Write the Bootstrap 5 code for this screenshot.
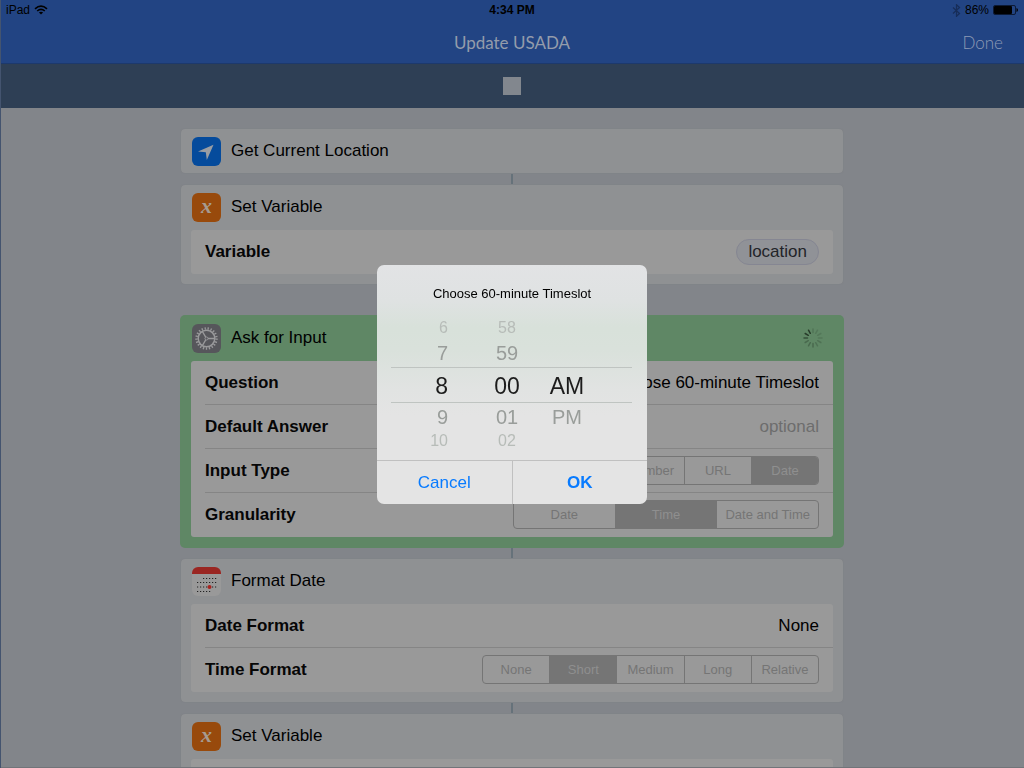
<!DOCTYPE html>
<html lang="en">
<head>
<meta charset="utf-8">
<meta name="viewport" content="width=device-width, initial-scale=1">
<title>Update USADA</title>
<link href="https://cdn.jsdelivr.net/npm/bootstrap@5.3.0/dist/css/bootstrap.min.css" rel="stylesheet">
<style>
  body { font-family: "Liberation Sans", Arial, sans-serif; font-size: 17px; line-height: 20px; color: #000; background: #82858a; height: 100vh; overflow: hidden; }
  .screen-edge { position: fixed; inset: 0; pointer-events: none; box-shadow: inset 1px 0 #44546f, inset 0 -1px #717479; }
  .app-head { background: #224483; border-bottom: 1px solid #1d396c; }
  .status { height: 20px; font-size: 12px; padding: 0 6px; }
  .status > *, .titlebar > * { flex: 1 1 0; }
  .titlebar { height: 43px; font-family: Lato, sans-serif; color: #949cab; padding: 2px 21px 0; }
  .titlebar h1 { font-size: 17px; line-height: 20px; }
  .runbar { height: 44px; background: #2e3f55; }
  .stop { width: 18px; height: 18px; background: #82878e; }
  .flow { max-width: 662px; padding: 21px 0 0; }
  .action { background: #8f9193; border-radius: 4px; box-shadow: 0 0 1px #74777c; }
  .action.running { background: #5f8765; box-shadow: 0 0 0 1px #5f8765; }
  .action-head { height: 44px; padding: 0 20px 0 11px; gap: 10px; }
  .action-head h2 { font-size: 17px; line-height: 20px; }
  .action-head svg { flex: none; }
  .link { width: 2px; height: 10px; margin: 1px auto; background: #66727a; }
  .rest { height: 32px; }
  .fields { padding: 1px 10px 10px; }
  .fields-in { background: #999; border-radius: 3px; padding-left: 14px; }
  .field { height: 44px; padding-right: 14px; border-bottom: 1px solid #858585; }
  .field:last-child { border-bottom-color: transparent; }
  .field-name { font-weight: 700; color: #060606; }
  .plain { background: none; border: 0; padding: 0; color: #000; text-align: right; outline: 0; appearance: none; }
  .plain::placeholder { color: #6d6d6d; opacity: 1; }
  .plain.done { font-weight: 300; color: #8d9ab5; }
  select.plain { text-align-last: right; }
  .pill { height: 26px; padding: 0 11px; border: 1px solid #858692; border-radius: 13px; background: #909297; color: #222429; }
  .seg { height: 29px; border: 1px solid #757575; border-radius: 4px; overflow: hidden; font-size: 13px; color: #757575; }
  .seg label { flex: 1 1 0; height: 100%; display: flex; align-items: center; justify-content: center; white-space: nowrap; }
  .seg label + input + label { border-left: 1px solid #757575; }
  .seg .btn-check:checked + label { background: #757575; color: #8f8f8f; }
  .seg3 { width: 306px; } .seg4 { width: 269px; } .seg5 { width: 337px; }
  .ask { position: fixed; inset: 0; }
  .ask-box { width: 270px; border-radius: 7px; overflow: hidden; background: linear-gradient(#e2e3e5 0, #dfe2e2 35px, #d8e1da 62px, #d9e1db 85px, #e1e3e2 125px, #e4e4e4 150px); }
  .ask-title { font-size: 13px; line-height: 18px; padding: 20px 0 15px; }
  .wheel { padding: 0 15px 8px 14px; }
  .wheel-row { display: grid; grid-template-columns: 86px 60px 60px; align-items: center; text-align: center; }
  .wheel-row > :first-child { text-align: right; padding-right: 29px; }
  .far { height: 21px; font-size: 16px; color: #b7bcb8; }
  .near { height: 28px; font-size: 20px; color: #999d9a; }
  .chosen { height: 36px; padding-top: 2px; font-size: 23px; color: #1c1c1c; border: solid #bfc4c1; border-width: 1px 0; }
  .ask-foot { border-top: 1px solid #c0c0c0; }
  .ask-foot button { flex: 1 1 0; height: 43px; padding: 2px 0 0; background: none; border: 0; color: #087bff; }
  .ask-foot button + button { border-left: 1px solid #c0c0c0; font-weight: 700; }
</style>
</head>
<body>
<header class="app-head">
  <div class="status d-flex align-items-center">
    <div class="d-flex align-items-center gap-1"><span>iPad</span>
      <svg width="14" height="10" viewBox="0 0 14 10" fill="none" stroke="#000" stroke-width="1.6"><path d="M1 3.8Q7-1.5 13 3.8M3.2 6Q7 2.6 10.800 6"/><path d="M7 9.600 4.900 7.500Q7 5.900 9.100 7.500Z" fill="#000" stroke="none"/></svg>
    </div>
    <div class="text-center fw-bold">4:34 PM</div>
    <div class="d-flex align-items-center justify-content-end gap-1">
      <svg width="9" height="13" viewBox="0 0 9 13" fill="none" stroke="#172d58" stroke-width="1.200"><path d="M1 3.500 7.500 9.500 4.500 12.300V.7L7.500 3.500 1 9.500"/></svg>
      <span>86%</span>
      <svg width="25" height="10" viewBox="0 0 25 10"><rect x=".5" y=".5" width="22" height="9" rx="1.500" fill="none" stroke="#0c1a35"/><rect x="1" y="1" width="18" height="8" rx="1" fill="#000"/><path d="M23.500 3Q25 3.500 25 5T23.500 7Z"/></svg>
    </div>
  </div>
  <nav class="titlebar d-flex align-items-center">
    <span></span>
    <h1 class="m-0 text-center fw-normal">Update USADA</h1>
    <div class="text-end"><button class="plain done" type="button">Done</button></div>
  </nav>
</header>
<div class="runbar d-flex align-items-center justify-content-center"><button class="stop border-0 p-0" type="button" aria-label="Stop"></button></div>

<main class="flow container-fluid">
  <section class="action">
    <div class="action-head d-flex align-items-center">
      <svg width="29" height="29" viewBox="0 0 29 29"><rect width="29" height="29" rx="6" fill="#054b9c"/><path d="M21.500 7.800 14.800 23 13.800 15.300 6 14.500Z" fill="#999da3"/></svg>
      <h2 class="m-0 fw-normal">Get Current Location</h2>
    </div>
  </section>
  <div class="link"></div>

  <section class="action">
    <div class="action-head d-flex align-items-center">
      <svg width="29" height="29" viewBox="0 0 29 29"><rect width="29" height="29" rx="6" fill="#984a0c"/><text x="14.500" y="20" text-anchor="middle" font-family="Liberation Serif, serif" font-style="italic" font-weight="700" font-size="22" fill="#a69b91">x</text></svg>
      <h2 class="m-0 fw-normal">Set Variable</h2>
    </div>
    <div class="fields"><div class="fields-in">
      <div class="field d-flex align-items-center justify-content-between"><span class="field-name">Variable</span><button class="pill" type="button">location</button></div>
    </div></div>
  </section>
  <div class="rest"></div>

  <section class="action running">
    <div class="action-head d-flex align-items-center">
      <svg width="29" height="29" viewBox="0 0 29 29" fill="none" stroke="#99999b"><rect width="29" height="29" rx="6" fill="#56565b" stroke="none"/><circle cx="14.500" cy="14.500" r="8.300" stroke-width="1.500"/><circle cx="14.500" cy="14.500" r="10" stroke-width="2.400" stroke-dasharray="1.300 1.692"/><circle cx="14.500" cy="14.500" r="1.500"/><path d="M16 14.500h7M13.700 13.200 10.200 7.200M13.700 15.800 10.200 21.800" stroke-width="1.300"/></svg>
      <h2 class="m-0 fw-normal flex-grow-1">Ask for Input</h2>
      <svg width="20" height="20" viewBox="-10 -10 20 20" stroke-width="1.500" stroke-linecap="round" stroke="#49694e"><path d="M0-5.500V-9" opacity=".6"/><path d="M2.700-4.700 4.500-7.800M4.700-2.700 7.800-4.500M5.500 0H9" opacity=".5"/><path d="M4.700 2.700 7.800 4.500M2.700 4.700 4.500 7.800" opacity=".7"/><path d="M0 5.500V9M-2.700 4.700-4.500 7.800M-4.700 2.700-7.800 4.500"/><path d="M-5.500 0H-9" stroke="#36503a"/><path d="M-4.700-2.700-7.800-4.500M-2.700-4.700-4.500-7.800" stroke="#273b2a"/></svg>
    </div>
    <div class="fields"><div class="fields-in">
      <div class="field d-flex align-items-center justify-content-between"><label class="field-name" for="question">Question</label><input class="plain" id="question" type="text" value="Choose 60-minute Timeslot"></div>
      <div class="field d-flex align-items-center justify-content-between"><label class="field-name" for="answer">Default Answer</label><input class="plain" id="answer" type="text" placeholder="optional"></div>
      <div class="field d-flex align-items-center justify-content-between"><span class="field-name" id="type-name">Input Type</span>
        <div class="seg seg4 d-flex" role="group" aria-labelledby="type-name">
          <input class="btn-check" type="radio" name="type" id="t1"><label for="t1">Text</label>
          <input class="btn-check" type="radio" name="type" id="t2"><label for="t2">Number</label>
          <input class="btn-check" type="radio" name="type" id="t3"><label for="t3">URL</label>
          <input class="btn-check" type="radio" name="type" id="t4" checked><label for="t4">Date</label>
        </div></div>
      <div class="field d-flex align-items-center justify-content-between"><span class="field-name" id="gran-name">Granularity</span>
        <div class="seg seg3 d-flex" role="group" aria-labelledby="gran-name">
          <input class="btn-check" type="radio" name="gran" id="g1"><label for="g1">Date</label>
          <input class="btn-check" type="radio" name="gran" id="g2" checked><label for="g2">Time</label>
          <input class="btn-check" type="radio" name="gran" id="g3"><label for="g3">Date and Time</label>
        </div></div>
    </div></div>
  </section>
  <div class="link"></div>

  <section class="action">
    <div class="action-head d-flex align-items-center">
      <svg width="29" height="29" viewBox="0 0 29 29"><rect width="29" height="29" rx="6" fill="#999"/><path d="M0 7V6A6 6 0 0 1 6 0H23A6 6 0 0 1 29 6V7Z" fill="#9a2622"/><g stroke="#222" stroke-width="1.200" stroke-dasharray="1.200 1.800"><path d="M11 11.500H25M5 15.500H25M5 20H25M5 24.500H18.500"/></g><circle cx="17.500" cy="20" r="2" fill="#a8231f"/></svg>
      <h2 class="m-0 fw-normal">Format Date</h2>
    </div>
    <div class="fields"><div class="fields-in">
      <div class="field d-flex align-items-center justify-content-between"><label class="field-name" for="dformat">Date Format</label><select class="plain" id="dformat"><option>None</option></select></div>
      <div class="field d-flex align-items-center justify-content-between"><span class="field-name" id="tf-name">Time Format</span>
        <div class="seg seg5 d-flex" role="group" aria-labelledby="tf-name">
          <input class="btn-check" type="radio" name="tf" id="f1"><label for="f1">None</label>
          <input class="btn-check" type="radio" name="tf" id="f2" checked><label for="f2">Short</label>
          <input class="btn-check" type="radio" name="tf" id="f3"><label for="f3">Medium</label>
          <input class="btn-check" type="radio" name="tf" id="f4"><label for="f4">Long</label>
          <input class="btn-check" type="radio" name="tf" id="f5"><label for="f5">Relative</label>
        </div></div>
    </div></div>
  </section>
  <div class="link"></div>

  <section class="action">
    <div class="action-head d-flex align-items-center">
      <svg width="29" height="29" viewBox="0 0 29 29"><rect width="29" height="29" rx="6" fill="#984a0c"/><text x="14.500" y="20" text-anchor="middle" font-family="Liberation Serif, serif" font-style="italic" font-weight="700" font-size="22" fill="#a69b91">x</text></svg>
      <h2 class="m-0 fw-normal">Set Variable</h2>
    </div>
    <div class="fields"><div class="fields-in"><div class="field"></div></div></div>
  </section>
</main>
<div class="screen-edge"></div>

<div class="ask d-flex align-items-center justify-content-center">
  <div class="ask-box" role="dialog" aria-labelledby="ask-title">
    <div class="ask-title text-center" id="ask-title">Choose 60-minute Timeslot</div>
    <div class="wheel">
      <div class="wheel-row far"><span>6</span><span>58</span></div>
      <div class="wheel-row near"><span>7</span><span>59</span></div>
      <div class="wheel-row chosen"><span>8</span><span>00</span><span>AM</span></div>
      <div class="wheel-row near"><span>9</span><span>01</span><span>PM</span></div>
      <div class="wheel-row far"><span>10</span><span>02</span></div>
    </div>
    <div class="ask-foot d-flex"><button type="button">Cancel</button><button type="button">OK</button></div>
  </div>
</div>
<script src="https://cdn.jsdelivr.net/npm/bootstrap@5.3.0/dist/js/bootstrap.bundle.min.js"></script>
</body>
</html>
